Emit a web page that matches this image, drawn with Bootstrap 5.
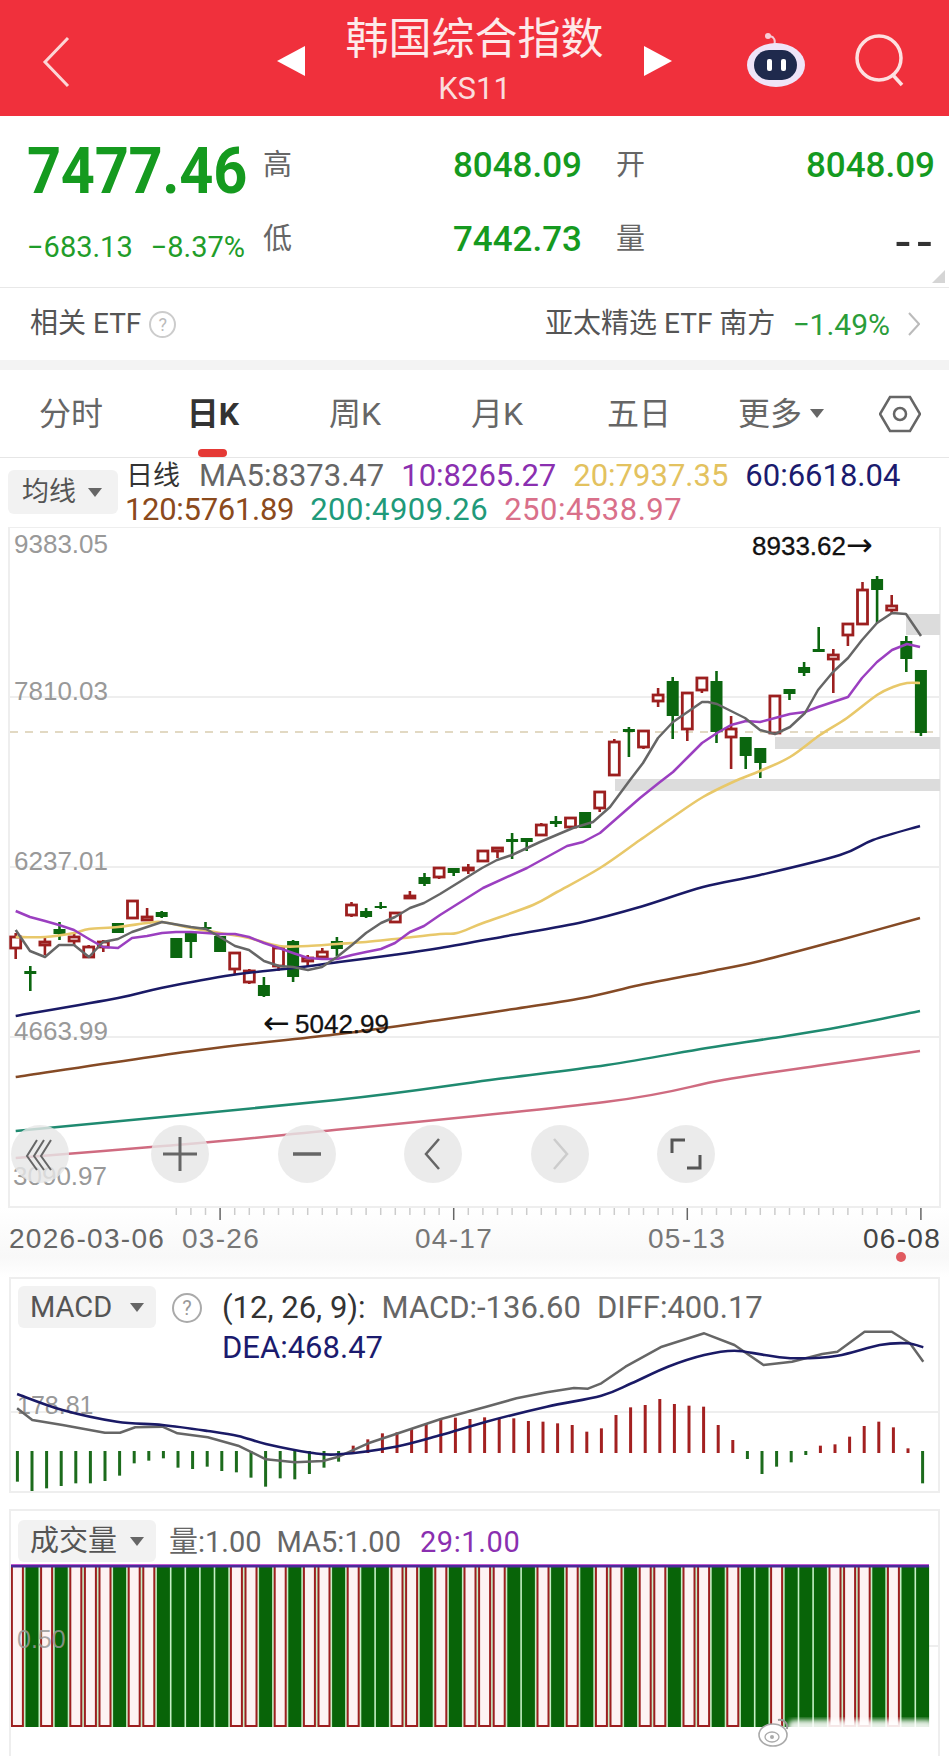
<!DOCTYPE html>
<html lang="zh-CN">
<head>
  <meta charset="UTF-8" />
  <title>韩国综合指数 KS11</title>
  <meta name="viewport" content="width=device-width, initial-scale=1" />
  <link href="https://cdn.jsdelivr.net/npm/bootstrap@5.3.0/dist/css/bootstrap.min.css" rel="stylesheet" />
  <style>
    body { width: 949px; margin: 0; background: #fff; font-family: Roboto, "Noto Sans CJK SC", sans-serif; color: #555; overflow-x: hidden; }
    svg { display: block; }
    svg text { font-family: "Liberation Sans", sans-serif; }
    svg text.arrow-mark { font-family: "DejaVu Sans", sans-serif; }

    .top-bar { height: 116px; background: #f0303c; display: grid; grid-template-columns: 1fr 397px 1fr; align-items: center; color: #fff; }
    .top-back { padding: 8px 0 0 42px; }
    .top-center { display: flex; align-items: center; justify-content: space-between; padding-top: 6px; }
    .top-title { text-align: center; line-height: 1; margin-top: -6px; }
    .top-title-cn { font-size: 43px; line-height: 46px; margin-top: 5px; color: #fdeaea; }
    .top-title-code { font-size: 31px; line-height: 34px; margin-top: 10px; color: #fbdcdc; }
    .top-right { display: flex; justify-content: flex-end; gap: 49px; padding: 4px 44px 0 0; align-items: center; }

    .quote-box { height: 171px; display: flex; padding: 13px 14px 0 27px; position: relative; }
    .quote-main { width: 236px; flex: none; }
    .quote-price { font-size: 59.5px; line-height: 62px; font-weight: 700; color: #159a1f; margin-top: 11px; letter-spacing: -.3px; transform: scaleY(1.08); }
    .quote-change { font-size: 29px; line-height: 32px; color: #1f9d2a; margin-top: 29px; white-space: nowrap; display: flex; gap: 18px; }
    .quote-grid { flex: 1; display: grid; grid-template-columns: 30px 1fr 34px 30px 1fr; grid-auto-rows: 74px; font-size: 29px; align-items: center; color: #666; }
    .quote-val { text-align: right; font-size: 35px; font-weight: 500; color: #159a1f; }
    .quote-dash { text-align: right; color: #333; font-family: "Liberation Sans", sans-serif; font-size: 52px; line-height: 40px; letter-spacing: 4px; margin-right: -2px; }
    .quote-corner { position: absolute; right: 4px; bottom: 4px; width: 0; height: 0; border-left: 13px solid transparent; border-bottom: 13px solid #d5d5d5; }

    .etf-row { height: 73px; border-top: 1px solid #e8e8e8; display: flex; align-items: center; justify-content: space-between; padding: 0 29px 0 30px; font-size: 28px; color: #555; }
    .etf-help { width: 27px; height: 27px; border: 2px solid #ccc; border-radius: 50%; color: #bbb; font-size: 18px; line-height: 23px; text-align: center; }
    .etf-pct { color: #2a9d3a; font-size: 30px; margin-left: 17px; margin-right: 18px; }
    .gap-band { height: 10px; background: #f3f3f3; }

    .period-tabs { height: 88px; border-bottom: 1px solid #e6e6e6; flex-wrap: nowrap; }
    .period-tabs .nav-link { width: 142px; height: 87px; padding: 0; display: flex; align-items: center; justify-content: center; font-size: 32px; color: #666; position: relative; white-space: nowrap; }
    .period-tabs .nav-link.active { color: #333; font-weight: 700; }
    .period-tabs .nav-link.active::after { content: ""; position: absolute; left: 56px; bottom: 0; width: 29px; height: 8px; background: #e53935; border-radius: 4px; }
    .period-gear { flex: 1; display: flex; align-items: center; justify-content: center; margin-left: -2px; }
    .caret-down { display: inline-block; width: 0; height: 0; border-left: 7px solid transparent; border-right: 7px solid transparent; border-top: 9px solid #666; }

    .ma-row { height: 69px; display: flex; padding: 0 0 0 8px; }
    .picker-btn { background: #f2f2f2; border-radius: 6px; color: #555; display: flex; align-items: center; flex: none; white-space: nowrap; }
    .ma-btn { width: 110px; height: 44px; margin-top: 12px; font-size: 27px; padding-left: 14px; gap: 12px; }
    .ma-list { font-size: 31px; line-height: 34px; padding: 1px 0 0 6px; white-space: nowrap; }
    .ma-line { display: flex; gap: 17px; }
    .ma-line + .ma-line { margin-left: 1px; gap: 16px; }
    .ma-day { color: #333; font-size: 27px; margin-left: 2px; margin-right: 2px; }
    .ma-wide { letter-spacing: .5px; }
    .c-ma5 { color: #666; } .c-ma10 { color: #8a2fb0; } .c-ma20 { color: #e3c25f; } .c-ma60 { color: #1b1b6e; }
    .c-ma120 { color: #8b4a1c; letter-spacing: -.3px; } .c-ma200 { color: #1f9a7a; } .c-ma250 { color: #d9708a; }

    .axis-row { height: 69px; background: linear-gradient(#fff, #f8f8f8 70%, #fff); }
    .indi-box { margin: 0 9px; border: 2px solid #eee; position: relative; }
    .macd-box { height: 216px; }
    .vol-box { height: 247px; margin-top: 16px; border-bottom: 0; }
    .indi-head { position: absolute; left: 7px; top: 7px; display: flex; font-size: 31px; line-height: 42px; white-space: nowrap; color: #666; z-index: 1; }
    .vol-box .indi-head { top: 9px; font-size: 29px; }
    .indi-btn { width: 138px; height: 42px; font-size: 29px; padding-left: 12px; justify-content: space-between; padding-right: 12px; }
    .indi-help { width: 30px; height: 30px; border: 2px solid #aaa; border-radius: 50%; color: #999; font-size: 20px; line-height: 26px; text-align: center; margin: 7px 20px 0 16px; }
    .indi-vals { gap: 16px; padding-top: 1px; }
    .vol-vals { gap: 15px; margin-left: 13px; padding-top: 1px; }
    .vol-last { margin-left: 4px; letter-spacing: .6px; }
    .indi-dark { color: #333; }
    .dea-line { color: #1b1b6e; margin-top: -2px; }
    .foot-band { height: 9px; background: #f5f5f5; }
    .foot-gap { height: 21px; }
  </style>
</head>
<body>
  <!-- top bar -->
  <header class="top-bar">
    <div class="top-back">
      <svg width="30" height="52" viewBox="0 0 30 52"><path d="M26 2 L3 26 L26 50" fill="none" stroke="#fcd6d6" stroke-width="3"/></svg>
    </div>
    <div class="top-center">
      <svg width="30" height="32" viewBox="0 0 30 32"><path d="M29 1 L1 16 L29 31 Z" fill="#fff"/></svg>
      <div class="top-title">
        <div class="top-title-cn">韩国综合指数</div>
        <div class="top-title-code">KS11</div>
      </div>
      <svg width="30" height="32" viewBox="0 0 30 32"><path d="M1 1 L29 16 L1 31 Z" fill="#fff"/></svg>
    </div>
    <div class="top-right">
      <svg width="60" height="56" viewBox="0 0 60 56">
        <path d="M28 14 C30 8 28 5 24 4" fill="none" stroke="#f3c9d6" stroke-width="2"/>
        <circle cx="22" cy="4" r="3" fill="#f7cdd8"/>
        <ellipse cx="30" cy="33" rx="29" ry="22" fill="#efe4f8"/>
        <rect x="8" y="18" width="43" height="30" rx="15" fill="#1f2a4d"/>
        <rect x="21" y="27" width="5" height="12" rx="2" fill="#fff"/>
        <rect x="35" y="27" width="5" height="12" rx="2" fill="#fff"/>
      </svg>
      <svg width="50" height="54" viewBox="0 0 50 54">
        <circle cx="24" cy="25" r="22" fill="none" stroke="#fde0e0" stroke-width="3.5"/>
        <path d="M37 41 L47 52" stroke="#fde0e0" stroke-width="3.5"/>
      </svg>
    </div>
  </header>

  <!-- quote -->
  <section class="quote-box">
    <div class="quote-main">
      <div class="quote-price">7477.46</div>
      <div class="quote-change"><span>−683.13</span><span>−8.37%</span></div>
    </div>
    <div class="quote-grid">
      <span>高</span><span class="quote-val">8048.09</span><span></span><span>开</span><span class="quote-val">8048.09</span>
      <span>低</span><span class="quote-val">7442.73</span><span></span><span>量</span><span class="quote-dash">--</span>
    </div>
    <i class="quote-corner"></i>
  </section>

  <!-- related etf -->
  <div class="etf-row">
    <div class="d-flex align-items-center gap-2"><span>相关 ETF</span><span class="etf-help">?</span></div>
    <div class="d-flex align-items-center">
      <span>亚太精选 ETF 南方</span><span class="etf-pct">−1.49%</span>
      <svg width="12" height="24" viewBox="0 0 12 24"><path d="M1 1 L11 12 L1 23" fill="none" stroke="#bbb" stroke-width="2"/></svg>
    </div>
  </div>
  <div class="gap-band"></div>

  <!-- period tabs -->
  <nav class="nav period-tabs">
    <a class="nav-link" href="#">分时</a>
    <a class="nav-link active" href="#">日K</a>
    <a class="nav-link" href="#">周K</a>
    <a class="nav-link" href="#">月K</a>
    <a class="nav-link" href="#">五日</a>
    <a class="nav-link" href="#">更多<i class="caret-down ms-2"></i></a>
    <div class="period-gear">
      <svg width="42" height="38" viewBox="0 0 42 38"><path d="M11 2 H31 L41 19 L31 36 H11 L1 19 Z" fill="none" stroke="#666" stroke-width="2.5"/><circle cx="21" cy="19" r="6" fill="none" stroke="#666" stroke-width="2.5"/></svg>
    </div>
  </nav>

  <!-- moving averages legend -->
  <div class="ma-row">
    <div class="picker-btn ma-btn">均线<i class="caret-down"></i></div>
    <div class="ma-list">
      <div class="ma-line">
        <span class="ma-day">日线</span><span class="c-ma5">MA5:8373.47</span><span class="c-ma10">10:8265.27</span><span class="c-ma20">20:7937.35</span><span class="c-ma60">60:6618.04</span>
      </div>
      <div class="ma-line">
        <span class="c-ma120">120:5761.89</span><span class="c-ma200 ma-wide">200:4909.26</span><span class="c-ma250 ma-wide">250:4538.97</span>
      </div>
    </div>
  </div>

  <!-- price chart, svg coords are page coords -->
  <svg id="kchart" width="949" height="681" viewBox="0 527 949 681"></svg>

  <!-- time axis -->
  <svg id="kaxis" class="axis-row" width="949" height="69" viewBox="0 1208 949 69"></svg>

  <!-- macd -->
  <section class="indi-box macd-box">
    <div class="indi-head">
      <div class="picker-btn indi-btn">MACD<i class="caret-down"></i></div>
      <div class="indi-help">?</div>
      <div>
        <div class="d-flex indi-vals"><span class="indi-dark">(12, 26, 9):</span><span>MACD:-136.60</span><span>DIFF:400.17</span></div>
        <div class="dea-line">DEA:468.47</div>
      </div>
    </div>
    <svg id="macdchart" width="927" height="212" viewBox="9 1279 927 212"></svg>
  </section>

  <!-- volume -->
  <section class="indi-box vol-box">
    <div class="indi-head">
      <div class="picker-btn indi-btn">成交量<i class="caret-down"></i></div>
      <div class="d-flex vol-vals"><span>量:1.00</span><span>MA5:1.00</span><span class="c-ma10 vol-last">29:1.00</span></div>
    </div>
    <svg id="volchart" width="927" height="243" viewBox="9 1511 927 243"></svg>
  </section>
  <div class="foot-gap"></div>
  <div class="foot-band"></div>

<script>
  const RED = '#9c1f1f', GREEN = '#0b660f';
  const stepX = i => 15.7 + 14.6 * i;
  const poly = (pts, color, w) => `<polyline points="${pts}" fill="none" stroke="${color}" stroke-width="${w}" stroke-linejoin="round"/>`;

  // catmull-rom through the points, for the slow moving averages
  const curve = (str, color, w) => {
    const p = str.split(' ').map(s => s.split(',').map(Number));
    let d = `M${p[0]}`;
    for (let i = 0; i < p.length - 1; i++) {
      const a = p[i - 1] || p[i], b = p[i], c = p[i + 1], e = p[i + 2] || c;
      d += `C${b[0] + (c[0] - a[0]) / 6},${b[1] + (c[1] - a[1]) / 6} ${c[0] - (e[0] - b[0]) / 6},${c[1] - (e[1] - b[1]) / 6} ${c[0]},${c[1]}`;
    }
    return `<path d="${d}" fill="none" stroke="${color}" stroke-width="${w}"/>`;
  };

  // [up?, bodyTop, bodyBottom, wickTop, wickBottom], y in page pixels
  const candles = [
    [1,937,948,933,959],[0,971,974,966,991],[1,942,945,938,955],[0,929,934,922,940],[1,937,941,933,945],
    [1,947,957,945,958],[1,942,947,940,952],[0,923,933,923,933],[1,901,918,901,918],[1,917,920,908,920],
    [0,912,917,911,918],[0,938,958,938,958],[0,932,942,932,958],[0,927,929,922,930],[0,936,952,936,952],
    [1,953,969,953,975],[1,971,982,969,984],[0,985,996,977,997],[1,948,966,947,971],[0,941,977,940,982],
    [1,958,961,955,967],[1,952,957,948,958],[0,941,949,937,956],[1,905,915,902,917],[0,911,917,908,918],
    [0,906,908,902,909],[1,913,922,912,922],[1,896,897,891,899],[0,877,884,873,886],[1,868,877,867,879],
    [0,868,873,868,876],[1,868,870,864,874],[1,851,861,851,861],[1,848,851,848,858],[0,839,842,833,859],
    [0,838,842,838,851],[1,825,835,823,836],[0,821,824,816,827],[1,818,827,818,829],[0,812,828,812,828],
    [1,792,808,792,812],[1,742,775,739,775],[0,729,732,727,757],[1,731,747,731,749],[1,695,701,688,707],
    [0,681,716,677,739],[1,693,729,693,741],[1,678,690,678,693],[0,681,732,671,743],[1,729,737,716,769],
    [0,737,756,737,769],[0,748,763,748,778],[1,696,733,696,733],[0,689,694,689,700],[0,667,673,662,676],
    [0,649,652,627,652],[1,655,659,649,693],[1,624,635,624,646],[1,590,624,582,624],[0,579,590,576,623],
    [1,606,610,595,613],[0,641,659,636,672],[0,670,733,670,736]
  ];

  const ma5 = '15.7,930 30,951 45,957 59,945 74,945 89,957 103,942 118,939 132,932 162,922 191,927 206,929 220,937 235,946 249,950 264,961 279,966 293,967 308,970 322,967 337,957 352,945 366,933 381,923 395,917 410,908 424,903 440,894 482,868 497,860 512,855 540,842 573,828 593,822 610,807 630,780 643,763 658,738 673,722 702,702 708,702 717,704 745,718 760,730 775,734 790,727 805,713 818,690 833,672 848,658 862,640 877,623 892,613 906,614 921,636';
  const ma10 = '15.7,911 30,917 45,921 59,925 74,930 89,939 103,947 118,948 132,938 147,936 162,933 176,932 191,932 206,933 220,934 235,934 249,937 264,943 279,948 293,953 308,958 322,959 337,959 352,955 366,952 381,949 395,943 410,932 424,926 440,915 483,888 527,868 567,846 583,842 600,833 640,798 660,782 673,772 688,757 702,743 717,733 731,725 746,721 760,722 775,718 790,714 805,712 818,707 833,702 848,697 862,678 877,662 892,650 907,644 920,647';
  const ma20 = '15.7,937 45,937 74,933 89,929 118,927 147,923 162,922 191,928 220,933 249,938 279,946 308,946 337,944 366,942 395,939 440,934 457,933 483,923 533,905 557,892 600,868 640,840 673,817 703,797 733,782 760,771 790,757 820,735 847,718 877,695 893,687 907,683 920,683';
  const ma60 = '15.7,1016 118,998 161,988 232,975 293,968 339,962 393,955 440,948 507,936 583,922 640,907 703,887 760,875 840,855 873,840 920,826';
  const ma120 = '15.7,1077 200,1050 339,1034 440,1020 507,1010 583,998 640,985 707,972 760,961 840,940 920,918';
  const ma200 = '15.7,1131 336,1100 490,1080 607,1065 707,1048 773,1038 840,1027 920,1011';
  const ma250 = '15.7,1158 151,1147 284,1135 605,1102 723,1080 823,1065 920,1051';

  let k = '';
  // grid lines and price labels
  [['9383.05', 527], ['7810.03', 697], ['6237.01', 867], ['4663.99', 1037]].forEach(([t, y]) => {
    k += `<line x1="9" x2="940" y1="${y}" y2="${y}" stroke="#e9e9e9" stroke-width="1.5"/>`;
    k += `<text x="14" y="${y === 527 ? 553 : y + 3}" font-size="26" fill="#999">${t}</text>`;
  });
  k += '<rect x="9" y="527" width="931" height="680" fill="none" stroke="#eee" stroke-width="2"/>';
  // grey strips over the last days
  k += '<rect x="906" y="614" width="34" height="21" fill="#dcdcdc"/><rect x="775" y="737" width="165" height="12" fill="#dcdcdc"/><rect x="615" y="779" width="325" height="12" fill="#dcdcdc"/>';
  k += '<line x1="10" x2="940" y1="732" y2="732" stroke="#d9cdb0" stroke-width="1.5" stroke-dasharray="8 7"/>';
  candles.forEach((c, i) => {
    const x = stepX(i), col = c[0] ? RED : GREEN;
    k += `<line x1="${x}" x2="${x}" y1="${c[3]}" y2="${c[4]}" stroke="${col}" stroke-width="2.6"/>`;
    k += c[0]
      ? `<rect x="${x - 5}" y="${c[1]}" width="10" height="${Math.max(c[2] - c[1], 2)}" fill="#fff" stroke="${col}" stroke-width="2.8"/>`
      : `<rect x="${x - 6}" y="${c[1]}" width="12" height="${Math.max(c[2] - c[1], 2)}" fill="${col}"/>`;
  });
  k += curve(ma250, '#cf6b80', 2.5) + curve(ma200, '#1f8a70', 2.5) + curve(ma120, '#854a25', 2.5) + curve(ma60, '#1a1a66', 2.5);
  k += curve(ma20, '#e8c86a', 2.6) + poly(ma10, '#9b3fc0', 2.5) + poly(ma5, '#666', 2.5);
  // high and low marks
  k += '<text x="752" y="555" font-size="26" fill="#111" stroke="#111" stroke-width=".3">8933.62</text><text class="arrow-mark" x="846" y="556" font-size="32" fill="#111">→</text>';
  k += '<text class="arrow-mark" x="263" y="1034" font-size="32" fill="#111">←</text><text x="295" y="1033" font-size="26" fill="#111" stroke="#111" stroke-width=".3">5042.99</text>';
  k += '<text x="13" y="1185" font-size="26" fill="#999">3090.97</text>';

  // zoom and pan buttons
  const btnIcons = [
    '<path d="M-3 -14 L-13 2 L-3 16 M4 -14 L-6 2 L4 16 M11 -14 L1 2 L11 16" fill="none" stroke="#666" stroke-width="2"/>',
    '<path d="M-17 0 H17 M0 -17 V17" stroke="#666" stroke-width="3"/>',
    '<path d="M-14 0 H14" stroke="#666" stroke-width="3.5"/>',
    '<path d="M6 -15 L-7 0 L6 15" fill="none" stroke="#666" stroke-width="2.5"/>',
    '<path d="M-6 -15 L7 0 L-6 15" fill="none" stroke="#ccc" stroke-width="2.5"/>',
    '<path d="M-1 -14 H-14 V-1 M1 14 H14 V1" fill="none" stroke="#555" stroke-width="3"/>'
  ];
  [40, 180, 307, 433, 560, 686].forEach((x, i) => {
    k += `<g transform="translate(${x} 1154)"><circle r="29" fill="#e6e6e6" fill-opacity=".82"/>${btnIcons[i]}</g>`;
  });
  document.getElementById('kchart').innerHTML = k;

  // axis ticks and dates
  let a = '';
  for (let i = 11; i <= 62; i++) {
    const major = (i - 14) % 16 === 0;
    a += `<line x1="${stepX(i)}" x2="${stepX(i)}" y1="1208" y2="${major ? 1220 : 1215}" stroke="${major ? '#666' : '#ccc'}" stroke-width="1.5"/>`;
  }
  [['2026-03-06', 9, '#666'], ['03-26', 182, '#777'], ['04-17', 415, '#777'], ['05-13', 648, '#777'], ['06-08', 863, '#444']].forEach(([t, x, c]) => {
    a += `<text x="${x}" y="1248" font-size="28" letter-spacing="1.3" fill="${c}">${t}</text>`;
  });
  a += '<circle cx="901" cy="1257" r="5" fill="#e05a60"/>';
  document.getElementById('kaxis').innerHTML = a;

  // macd: values read off the picture, y = 1300 + v / 3
  const macdBars = [545,578,565,558,550,550,543,527,490,482,475,503,507,500,513,517,533,560,535,538,522,503,485,437,418,400,397,385,370,355,353,357,352,355,355,363,365,370,375,395,385,345,322,315,297,312,317,320,375,420,477,522,500,487,465,437,433,410,378,365,382,445,550];
  const macdY = v => 1300 + v / 3;
  const diff = [[25,325],[50,360],[100,375],[170,398],[195,398],[220,382],[265,380],[290,400],[340,412],[390,437],[436,478],[484,487],[530,483],[556,470],[605,430],[725,357],[800,320],[850,295],[900,277],[945,264],[968,266],[990,250],[1030,200],[1090,140],[1160,100],[1210,135],[1258,195],[1305,185],[1355,162],[1380,155],[1425,95],[1470,95],[1500,130],[1522,185]];
  const dea = [[25,282],[100,330],[190,365],[265,375],[340,393],[390,408],[436,432],[510,458],[556,463],[650,440],[725,405],[800,365],[900,320],[990,287],[1040,250],[1100,200],[1160,165],[1210,152],[1260,165],[1310,175],[1380,167],[1450,135],[1495,130],[1522,142]];
  const toPts = arr => arr.map(([x, v]) => `${(x / 1.652).toFixed(1)},${macdY(v).toFixed(1)}`).join(' ');
  let m = '<line x1="9" x2="936" y1="1412" y2="1412" stroke="#e9e9e9" stroke-width="1.5"/>';
  m += '<text x="15" y="1414" font-size="25" fill="#999">178.81</text>';
  macdBars.forEach((v, i) => {
    const x = stepX(i) - .3, up = v < 453;
    m += `<line x1="${x}" x2="${x}" y1="${macdY(up ? v : 453)}" y2="${macdY(up ? 459 : v)}" stroke="${up ? '#a32020' : '#1c6b1c'}" stroke-width="3"/>`;
  });
  m += poly(toPts(diff), '#666', 2.5) + curve(toPts(dea), '#1a1a66', 2.6);
  document.getElementById('macdchart').innerHTML = m;

  // volume: every day is 1.00 so all bars are full height
  let v = '<line x1="9" x2="936" y1="1646" y2="1646" stroke="#e9e9e9" stroke-width="1.5"/>';
  v += '<defs><filter id="wm-blur"><feGaussianBlur stdDeviation="2.5"/></filter></defs>';
  v += '<rect x="9" y="1566" width="918" height="161" fill="#c6f0c6"/>';
  candles.forEach((c, i) => {
    const x = stepX(i) - .3;
    v += c[0]
      ? `<rect x="${x - 5.5}" y="1566" width="11" height="160" fill="#fdf3f3" stroke="${RED}" stroke-width="2"/>`
      : `<rect x="${x - 6.5}" y="1566" width="13" height="161" fill="#086408"/>`;
  });
  v += '<line x1="9" x2="927" y1="1566" y2="1566" stroke="#4a2a9a" stroke-width="3"/><line x1="9" x2="927" y1="1564.5" y2="1564.5" stroke="#c05ad0" stroke-width="1"/>';
  v += '<text x="15" y="1648" font-size="25" fill="#999" fill-opacity=".85">0.50</text>';
  // watermark: smudged logo and name
  v += '<rect x="786" y="1720" width="146" height="26" rx="6" fill="#fff" fill-opacity=".9" filter="url(#wm-blur)"/>';
  v += '<g transform="translate(771 1735)"><ellipse rx="14" ry="11" fill="#fff" stroke="#aaa" stroke-width="1.6"/><ellipse cx="-1" cy="2" rx="7" ry="5" fill="none" stroke="#aaa" stroke-width="1.3"/><circle cx="-1" cy="2" r="2" fill="#aaa"/><path d="M5 -15 C11 -16 15 -12 14 -6" fill="none" stroke="#999" stroke-width="2"/></g>';
  document.getElementById('volchart').innerHTML = v;
</script>
<script src="https://cdn.jsdelivr.net/npm/bootstrap@5.3.0/dist/js/bootstrap.bundle.min.js"></script>
</body>
</html>
